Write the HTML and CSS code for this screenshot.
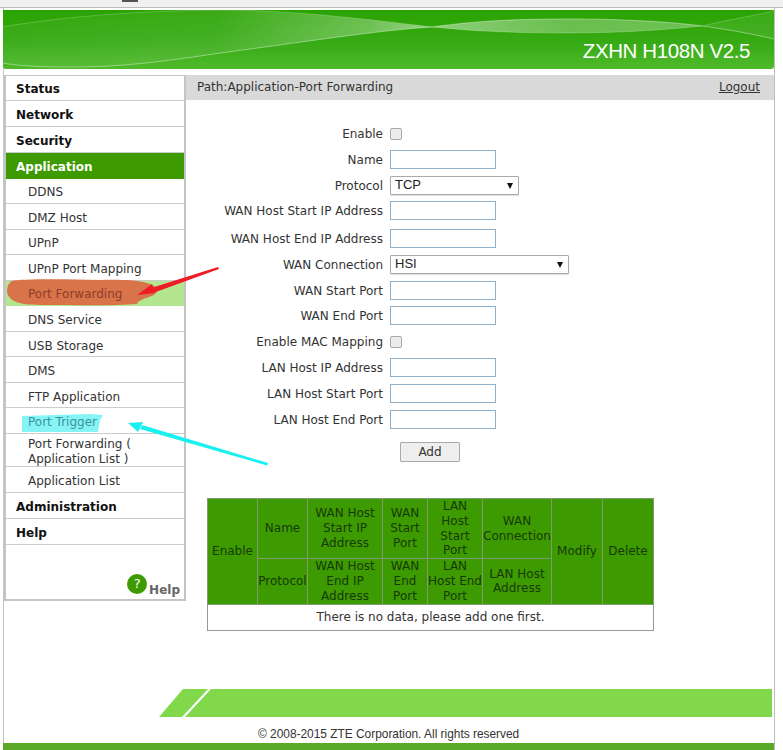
FILE: index.html
```html
<!DOCTYPE html>
<html>
<head>
<meta charset="utf-8">
<title>ZXHN H108N V2.5</title>
<link rel="stylesheet" href="styles.css">
</head>
<body>
<div class="topbar"><span class="tab-mark"></span></div>
<div class="page">
  <header class="banner">
    <svg class="banner-art" viewBox="0 0 772 59" preserveAspectRatio="none">
      <defs>
        <linearGradient id="bg" x1="0" y1="0" x2="0" y2="1">
          <stop offset="0" stop-color="#29a300"/>
          <stop offset="0.55" stop-color="#36aa14"/>
          <stop offset="1" stop-color="#50ba2c"/>
        </linearGradient>
        <linearGradient id="leftLens" x1="0" y1="0" x2="1" y2="0">
          <stop offset="0" stop-color="#fff" stop-opacity="0.04"/>
          <stop offset="0.5" stop-color="#fff" stop-opacity="0.08"/>
          <stop offset="0.85" stop-color="#fff" stop-opacity="0.3"/>
          <stop offset="1" stop-color="#fff" stop-opacity="0.5"/>
        </linearGradient>
        <linearGradient id="rightLens" x1="0" y1="0" x2="1" y2="0">
          <stop offset="0" stop-color="#fff" stop-opacity="0.45"/>
          <stop offset="0.5" stop-color="#fff" stop-opacity="0.28"/>
          <stop offset="1" stop-color="#fff" stop-opacity="0.3"/>
        </linearGradient>
      </defs>
      <rect width="772" height="59" fill="url(#bg)"/>
      <path d="M0 17 C60 6 150 0 225 0 C300 1 370 10 430 17 C380 20 330 28 225 42 C170 50 120 58 60 57 C30 57 10 55 0 53 Z" fill="url(#leftLens)"/>
      <path d="M430 17 C480 10 520 9 570 9 C620 9 670 12 700 16 C660 20 620 23 560 23 C510 23 470 21 430 17 Z" fill="url(#rightLens)"/>
      <path d="M700 16 C730 9 755 5 772 1 L772 29 C755 25 730 20 700 16 Z" fill="#fff" opacity="0.08"/>
      <path d="M0 17 C60 6 150 0 225 0 C300 1 370 10 430 17 C470 21 510 23 560 23 C620 23 660 20 700 16 C730 9 755 5 772 1" fill="none" stroke="#fff" stroke-opacity="0.22"/>
      <path d="M0 53 C10 55 30 57 60 57 C120 58 170 50 225 42 C330 28 380 20 430 17 C480 10 520 9 570 9 C620 9 670 12 700 16 C730 20 755 25 772 29" fill="none" stroke="#fff" stroke-opacity="0.4"/>
    </svg>
    <span class="model">ZXHN H108N V2.5</span>
  </header>

  <div class="layout">
    <nav class="menu">
      <a class="item top">Status</a>
      <a class="item top">Network</a>
      <a class="item top">Security</a>
      <a class="item top open">Application</a>
      <a class="item sub">DDNS</a>
      <a class="item sub">DMZ Host</a>
      <a class="item sub">UPnP</a>
      <a class="item sub">UPnP Port Mapping</a>
      <a class="item sub current"><span class="ink-red">Port Forwarding</span></a>
      <a class="item sub">DNS Service</a>
      <a class="item sub">USB Storage</a>
      <a class="item sub">DMS</a>
      <a class="item sub">FTP Application</a>
      <a class="item sub"><span class="ink-cyan">Port Trigger</span></a>
      <a class="item sub double">Port Forwarding ( Application List )</a>
      <a class="item sub list-end">Application List</a>
      <a class="item top">Administration</a>
      <a class="item top">Help</a>
      <div class="menu-help"><span class="help-icon">?</span><span class="help-text">Help</span></div>
    </nav>

    <main class="content">
      <div class="pathbar"><span>Path:Application-Port Forwarding</span><a class="logout">Logout</a></div>

      <form class="form">
        <label class="lab">Enable</label><div class="ctl"><span class="check"></span></div>
        <label class="lab">Name</label><div class="ctl"><span class="input"></span></div>
        <label class="lab">Protocol</label><div class="ctl"><span class="select short">TCP<i class="caret"></i></span></div>
        <label class="lab">WAN Host Start IP Address</label><div class="ctl"><span class="input"></span></div>
        <label class="lab">WAN Host End IP Address</label><div class="ctl"><span class="input"></span></div>
        <label class="lab">WAN Connection</label><div class="ctl"><span class="select wide">HSI<i class="caret"></i></span></div>
        <label class="lab">WAN Start Port</label><div class="ctl"><span class="input"></span></div>
        <label class="lab">WAN End Port</label><div class="ctl"><span class="input"></span></div>
        <label class="lab">Enable MAC Mapping</label><div class="ctl"><span class="check"></span></div>
        <label class="lab">LAN Host IP Address</label><div class="ctl"><span class="input"></span></div>
        <label class="lab">LAN Host Start Port</label><div class="ctl"><span class="input"></span></div>
        <label class="lab">LAN Host End Port</label><div class="ctl"><span class="input"></span></div>
      </form>
      <div class="actions"><span class="btn">Add</span></div>

      <table class="rules">
        <colgroup>
          <col class="c1"><col class="c2"><col class="c3"><col class="c4"><col class="c5"><col class="c6"><col class="c7"><col class="c8">
        </colgroup>
        <tr class="r1">
          <th rowspan="2">Enable</th><th>Name</th><th>WAN Host Start IP Address</th><th>WAN Start Port</th><th>LAN Host Start Port</th><th>WAN Connection</th><th rowspan="2">Modify</th><th rowspan="2">Delete</th>
        </tr>
        <tr class="r2">
          <th>Protocol</th><th>WAN Host End IP Address</th><th>WAN End Port</th><th>LAN Host End Port</th><th>LAN Host Address</th>
        </tr>
        <tr class="r3"><td colspan="8">There is no data, please add one first.</td></tr>
      </table>
    </main>
  </div>

  <footer class="foot">
    <div class="stripe">
      <svg class="stripe-art" viewBox="0 0 613 28" preserveAspectRatio="none">
        <polygon points="0,28 24,0 613,0 613,28" fill="#82d84b"/>
        <polygon points="23,28 49,0 52,0 26,28" fill="#ffffff"/>
      </svg>
    </div>
    <p class="copy">© 2008-2015 ZTE Corporation. All rights reserved</p>
    <div class="bottom"></div>
  </footer>
</div>

<svg class="notes" viewBox="0 0 783 750">
  <path d="M12 281 C20 279 60 279 100 280 C130 279 155 281 157 290 C157 298 140 297 137 304 C110 306 80 305 60 305 C30 305 10 306 7 292 C7 286 9 283 12 281 Z" fill="#d9734a"/>
  <polygon points="218,267 219,269 153,293 151,288" fill="#ee1c25"/>
  <polygon points="137,295 152,284 155,293" fill="#ee1c25"/>
  <path d="M22 416 L90 414 L103 415 L100 420 L98 432 L22 432 Z" fill="#86f4f4"/>
  <polygon points="268,463 267,465.5 140,429 142,425" fill="#19f0f0"/>
  <polygon points="128,423 143,422 138,432" fill="#19f0f0"/>
</svg>
</body>
</html>
```
FILE: styles.css
```css
* { box-sizing: border-box; }
html, body { margin: 0; padding: 0; }
body {
  width: 783px;
  height: 750px;
  overflow: hidden;
  position: relative;
  background: #fff;
  font-family: "DejaVu Sans", Verdana, sans-serif;
  font-size: 12px;
  color: #333;
}
.topbar {
  height: 8px;
  background: #f1f1f1;
  border-bottom: 1px solid #bbb;
  position: relative;
}
.tab-mark {
  position: absolute;
  left: 122px;
  top: 0;
  width: 16px;
  height: 2px;
  background: #555;
}
.page {
  margin-left: 3px;
  width: 772px;
  height: 742px;
  padding-top: 2px;
  border-left: 1px solid #c4c4c4;
  border-right: 1px solid #bdbdbd;
  display: flex;
  flex-direction: column;
}
.banner {
  height: 59px;
  margin: 0 0 0 -1px;
  position: relative;
  display: flex;
  align-items: flex-end;
  justify-content: flex-end;
  padding: 0 24px 6px 0;
}
.banner-art {
  position: absolute;
  inset: 0;
  width: 100%;
  height: 100%;
  border-radius: 0 0 3px 3px;
}
.model {
  position: relative;
  font-family: "Liberation Sans", Arial, sans-serif;
  font-size: 20.5px;
  letter-spacing: -0.4px;
  color: #fff;
  line-height: 24px;
}
.layout {
  margin-top: 6px;
  display: flex;
  height: 526px;
}
.menu {
  width: 182px;
  flex: none;
  border: 1px solid #c4c4c4;
  border-width: 1px 2px 2px 2px;
  height: 526px;
  display: flex;
  flex-direction: column;
}
.item {
  display: flex;
  align-items: center;
  flex: none;
  padding-top: 4px;
  border-bottom: 1px solid #ccc;
  line-height: 15px;
}
.top { height: 26px; padding-left: 10px; font-weight: bold; color: #111; }
.top:first-child { height: 25px; padding-top: 2px; }
.sub { height: 25.55px; padding-left: 22px; padding-right: 40px; color: #333; }
.open { height: 25.5px; background: #3d9a00; color: #fff; border-bottom-color: #3d9a00; }
.current { background: #b4e58f; border-bottom-color: #b4e58f; }
.double { height: 33px; }
.list-end { height: 26px; }
.ink-red { position: relative; z-index: 2; color: #8f3d28; }
.ink-cyan { position: relative; z-index: 2; color: #3a93a0; }
.menu-help {
  margin-top: auto;
  padding: 0 4px 2px 0;
  display: flex;
  justify-content: flex-end;
  align-items: flex-end;
}
.help-icon {
  width: 20px;
  height: 20px;
  border-radius: 50%;
  background: #3d9a00;
  color: #fff;
  font-size: 13px;
  line-height: 20px;
  text-align: center;
  margin-bottom: 3px;
  margin-right: 2px;
}
.help-text { font-weight: bold; color: #666; }
.content {
  flex: 1;
  min-width: 0;
  display: flex;
  flex-direction: column;
}
.pathbar {
  height: 25px;
  flex: none;
  background: #d9d9d9;
  display: flex;
  justify-content: space-between;
  align-items: center;
  padding: 0 14px 2px 11px;
  color: #333;
}
.logout { text-decoration: underline; }
.form {
  margin-top: 24px;
  display: grid;
  grid-template-columns: 197px 1fr;
  column-gap: 7px;
  grid-template-rows: 26px 26px 25px 28px 26px 26px 25px 26px 26px 26px 26px 19px;
}
.lab {
  text-align: right;
  line-height: 21px;
  height: 19px;
  color: #333;
  white-space: nowrap;
}
.ctl { display: flex; align-items: center; height: 19px; }
.input {
  width: 106px;
  height: 19px;
  border: 1px solid #8fb0c8;
  background: #fff;
}
.check {
  width: 12px;
  height: 12px;
  border: 1px solid #a9a9a9;
  border-radius: 2px;
  background: #ececec;
}
.select {
  height: 19px;
  background: #fff;
  border: 1px solid #aaa;
  border-radius: 1px;
  font-family: "Liberation Sans", Arial, sans-serif;
  font-size: 13px;
  color: #222;
  padding-left: 4px;
  line-height: 16px;
  position: relative;
  box-shadow: 0 1px 1px #ddd;
}
.short { width: 129px; }
.wide { width: 179px; }
.caret {
  position: absolute;
  right: 5px;
  top: 6px;
  width: 0;
  height: 0;
  border-left: 3px solid transparent;
  border-right: 3px solid transparent;
  border-top: 6px solid #111;
}
.actions {
  margin-top: 13px;
  padding-left: 214px;
}
.btn {
  display: block;
  width: 60px;
  height: 20px;
  background: #eee;
  border: 1px solid #aaa;
  border-radius: 1px;
  text-align: center;
  line-height: 19px;
  color: #333;
}
.rules {
  margin: 36px 0 0 21px;
  width: 446px;
  table-layout: fixed;
  border-collapse: collapse;
  border: 1px solid #999;
}
.c1 { width: 50px; }
.c2 { width: 50px; }
.c3 { width: 75px; }
.c4 { width: 45px; }
.c5 { width: 55px; }
.c6 { width: 69px; }
.c7 { width: 51px; }
.c8 { width: 51px; }
.rules th {
  background: #3d9a00;
  border: 1px solid #7f9c70;
  font-weight: normal;
  color: #173a08;
  line-height: 14.8px;
  padding: 0;
  text-align: center;
}
.r1 { height: 60px; }
.r2 { height: 45px; }
.r3 { height: 26px; }
.rules td { text-align: center; background: #fff; color: #333; padding: 0; }
.foot {
  margin-top: auto;
  display: flex;
  flex-direction: column;
}
.stripe {
  height: 28px;
  margin-left: 155px;
  margin-right: 2px;
}
.stripe-art { display: block; width: 100%; height: 100%; }
.copy {
  margin: 10px 0 2px 254px;
  font-family: "Liberation Sans", Arial, sans-serif;
  font-size: 11.9px;
  line-height: 14px;
  color: #333;
}
.bottom {
  height: 7px;
  margin-left: -1px;
  background: #5aa928;
}
.notes {
  position: absolute;
  left: 0;
  top: 0;
  width: 783px;
  height: 750px;
  z-index: 1;
  pointer-events: none;
}
```
